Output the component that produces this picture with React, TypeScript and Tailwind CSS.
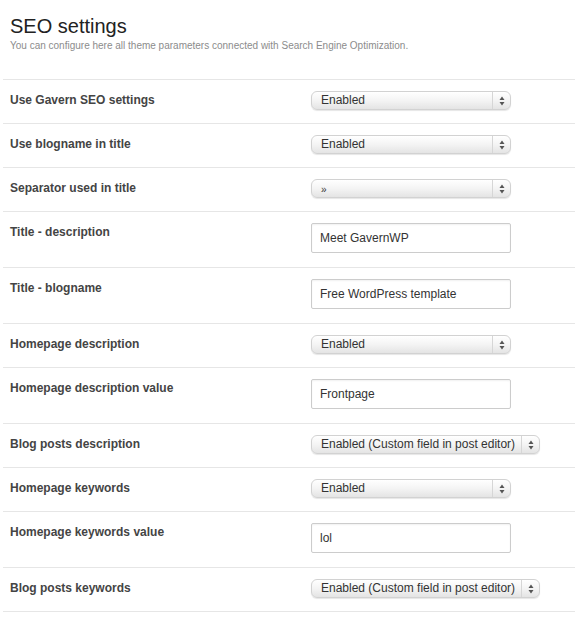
import React from 'react';

type Row =
  | { label: string; kind: 'select'; value: string; wide?: boolean }
  | { label: string; kind: 'input'; value: string };

const rows: Row[] = [
  { label: 'Use Gavern SEO settings', kind: 'select', value: 'Enabled' },
  { label: 'Use blogname in title', kind: 'select', value: 'Enabled' },
  { label: 'Separator used in title', kind: 'select', value: '»' },
  { label: 'Title - description', kind: 'input', value: 'Meet GavernWP' },
  { label: 'Title - blogname', kind: 'input', value: 'Free WordPress template' },
  { label: 'Homepage description', kind: 'select', value: 'Enabled' },
  { label: 'Homepage description value', kind: 'input', value: 'Frontpage' },
  { label: 'Blog posts description', kind: 'select', value: 'Enabled (Custom field in post editor)', wide: true },
  { label: 'Homepage keywords', kind: 'select', value: 'Enabled' },
  { label: 'Homepage keywords value', kind: 'input', value: 'lol' },
  { label: 'Blog posts keywords', kind: 'select', value: 'Enabled (Custom field in post editor)', wide: true },
];

function FakeSelect({ value, wide }: { value: string; wide?: boolean }) {
  return (
    <div
      className={`flex items-stretch h-[19px] rounded-[6px] border border-[#d2d2d2] bg-gradient-to-b from-[#ffffff] via-[#f4f4f4] to-[#e4e4e4] shadow-[0_1px_1px_rgba(0,0,0,0.1)] ${wide ? 'w-[229px]' : 'w-[200px]'}`}
    >
      <span className={`flex-1 pl-[9px] leading-[17px] text-[#333] ${value === '»' ? 'text-[10px] pt-[1px]' : 'text-[12px]'}`}>
        {value}
      </span>
      <span className="w-[18px] border-l border-[#d6d6d6] flex items-center justify-center">
        <svg width="6" height="10" viewBox="0 0 6 10">
          <path d="M3 0.5 L5.5 4 L0.5 4 Z" fill="#555" />
          <path d="M3 9.5 L5.5 6 L0.5 6 Z" fill="#555" />
        </svg>
      </span>
    </div>
  );
}

function FakeInput({ value }: { value: string }) {
  return (
    <div className="w-[200px] h-[30px] border border-[#cccccc] rounded-[2px] bg-white shadow-[inset_0_1px_2px_rgba(0,0,0,0.06)] pl-[8px] flex items-center text-[12px] text-[#333]">
      {value}
    </div>
  );
}

export default function App() {
  return (
    <div className="w-[575px] min-h-[617px] bg-white pl-[3px] font-['Liberation_Sans',Arial,sans-serif]">
      {/* Heading */}
      <div className="pl-[7px] pt-[14px]">
        <h1 className="text-[20px] leading-6 text-[#222]">SEO settings</h1>
        <p className="text-[10px] leading-4 text-[#8c8c8c]">
          You can configure here all theme parameters connected with Search Engine Optimization.
        </p>
      </div>

      {/* Settings list */}
      <div className="mt-[25px] border-t border-[#e6e6e6]">
        {rows.map(row => (
          <div
            key={row.label}
            className={`flex border-b border-[#e6e6e6] pl-[7px] pt-[11px] ${row.kind === 'input' ? 'h-[56px]' : 'h-[44px]'}`}
          >
            <div className="w-[301px] text-[12px] leading-4 font-bold text-[#444] pt-[1px]">{row.label}</div>
            {row.kind === 'select' ? (
              <FakeSelect value={row.value} wide={row.wide} />
            ) : (
              <FakeInput value={row.value} />
            )}
          </div>
        ))}
      </div>
    </div>
  );
}
